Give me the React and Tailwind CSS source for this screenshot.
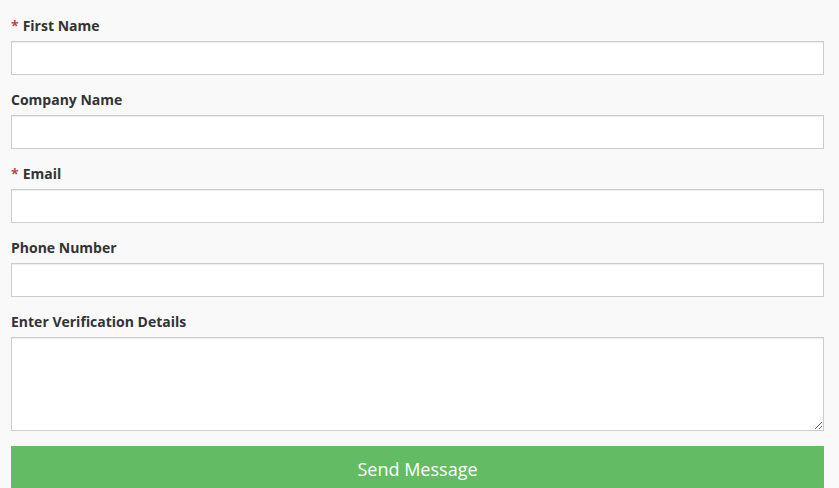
import React from "react";

function Field({ label, required, textarea }) {
  return (
    <div className="flex flex-col">
      <label className="h-5 leading-5 mb-[5px] text-[14px] font-bold text-[#333]">
        {required && <span className="text-[#b94a48] mr-[4px]">*</span>}
        {label}
      </label>
      {textarea ? (
        <textarea className="h-[94px] w-full border border-[#ccc] bg-white shadow-[inset_0_1px_1px_rgba(0,0,0,0.075)] outline-none" />
      ) : (
        <input className="h-[34px] w-full border border-[#ccc] bg-white shadow-[inset_0_1px_1px_rgba(0,0,0,0.075)] outline-none" />
      )}
    </div>
  );
}

export default function App() {
  return (
    <div
      className="w-[839px] h-[488px] overflow-hidden bg-[#f9f9f9] pl-[11px] pr-[15px] pt-[16px]"
      style={{ fontFamily: '"Open Sans", "Noto Sans", sans-serif' }}
    >
      <div className="flex flex-col gap-[15px]">
        <Field label="First Name" required />
        <Field label="Company Name" />
        <Field label="Email" required />
        <Field label="Phone Number" />
        <Field label="Enter Verification Details" textarea />
      </div>
      <button className="mt-[15px] w-full h-[46px] bg-[#63bb64] text-white text-[18px] leading-[46px]">
        Send Message
      </button>
    </div>
  );
}
